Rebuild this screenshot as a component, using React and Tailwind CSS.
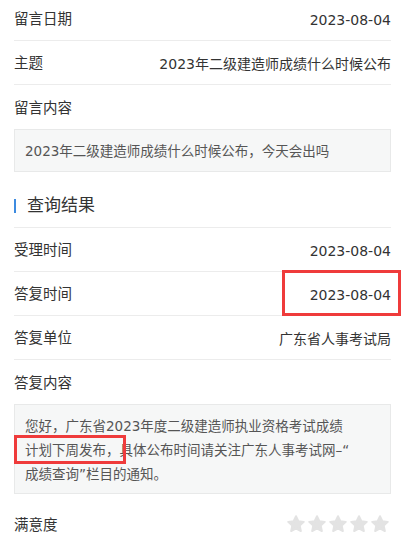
import React from "react";

// 留言详情 + 查询结果
const FONT = { fontFamily: '"DejaVu Sans", "Noto Sans CJK SC", sans-serif' };

function Row({ label, value, first, children }) {
  return (
    <div className={`relative flex items-center justify-between border-b border-[#ececec] text-[#333] ${first ? "h-[41px]" : "h-[44px] pt-[3px]"}`}>
      <span className="text-[14.5px]">{label}</span>
      <span className="text-[14px]">{value}</span>
      {children}
    </div>
  );
}

function Star() {
  return (
    <svg width="18" height="18" viewBox="1 1 22 22">
      <path
        d="M12 2.5l2.9 6.1 6.6.8-4.9 4.6 1.3 6.6L12 17.3l-5.9 3.3 1.3-6.6-4.9-4.6 6.6-.8z"
        fill="#e3e3e3"
        stroke="#e3e3e3"
        strokeWidth="2.4"
        strokeLinejoin="round"
      />
    </svg>
  );
}

export default function App() {
  return (
    <div className="w-[405px] h-[547px] overflow-hidden bg-white px-[14px]" style={FONT}>
      <Row first label="留言日期" value="2023-08-04" />
      <Row label="主题" value="2023年二级建造师成绩什么时候公布" />
      <div className="h-[44px] pt-[3px] flex items-center text-[14.5px] text-[#333]">留言内容</div>
      <div className="h-[43px] flex items-center px-[10px] pt-[2px] bg-[#f6f7f7] border border-[#e8e9e9] text-[13.5px] text-[#555]">
        2023年二级建造师成绩什么时候公布，今天会出吗
      </div>

      <div className="mt-3 h-[44px] flex items-center border-b border-[#ececec]">
        <span className="w-[2px] h-[14px] bg-[#3d8be0] mr-[11px]" />
        <span className="text-[17px] text-[#333]">查询结果</span>
      </div>

      <Row label="受理时间" value="2023-08-04" />
      <Row label="答复时间" value="2023-08-04">
        <span className="absolute right-[-10px] top-[-2px] w-[119px] h-[46px] border-[3px] border-[#ef3b3b]" />
      </Row>
      <Row label="答复单位" value="广东省人事考试局" />
      <div className="h-[44px] pt-[3px] flex items-center text-[14.5px] text-[#333]">答复内容</div>
      <div className="px-[10px] pt-[9px] pb-[7px] bg-[#f6f7f7] border border-[#e8e9e9] text-[13.5px] leading-[24px] text-[#555] whitespace-nowrap">
        您好，广东省2023年度二级建造师执业资格考试成绩
        <br />
        <span className="relative inline-block">
          计划下周发布，
          <span className="absolute left-[-11px] right-[-6px] top-[-3px] bottom-[-2px] border-[3px] border-[#ef3b3b]" />
        </span>
        具体公布时间请关注广东人事考试网–“
        <br />
        成绩查询”栏目的通知。
      </div>

      <div className="mt-2 h-[44px] pt-[3px] flex items-center justify-between text-[14.5px] text-[#333]">
        <span>满意度</span>
        <div className="flex gap-[3px] mr-[2px] mt-[-4px]">
          <Star />
          <Star />
          <Star />
          <Star />
          <Star />
        </div>
      </div>
    </div>
  );
}
